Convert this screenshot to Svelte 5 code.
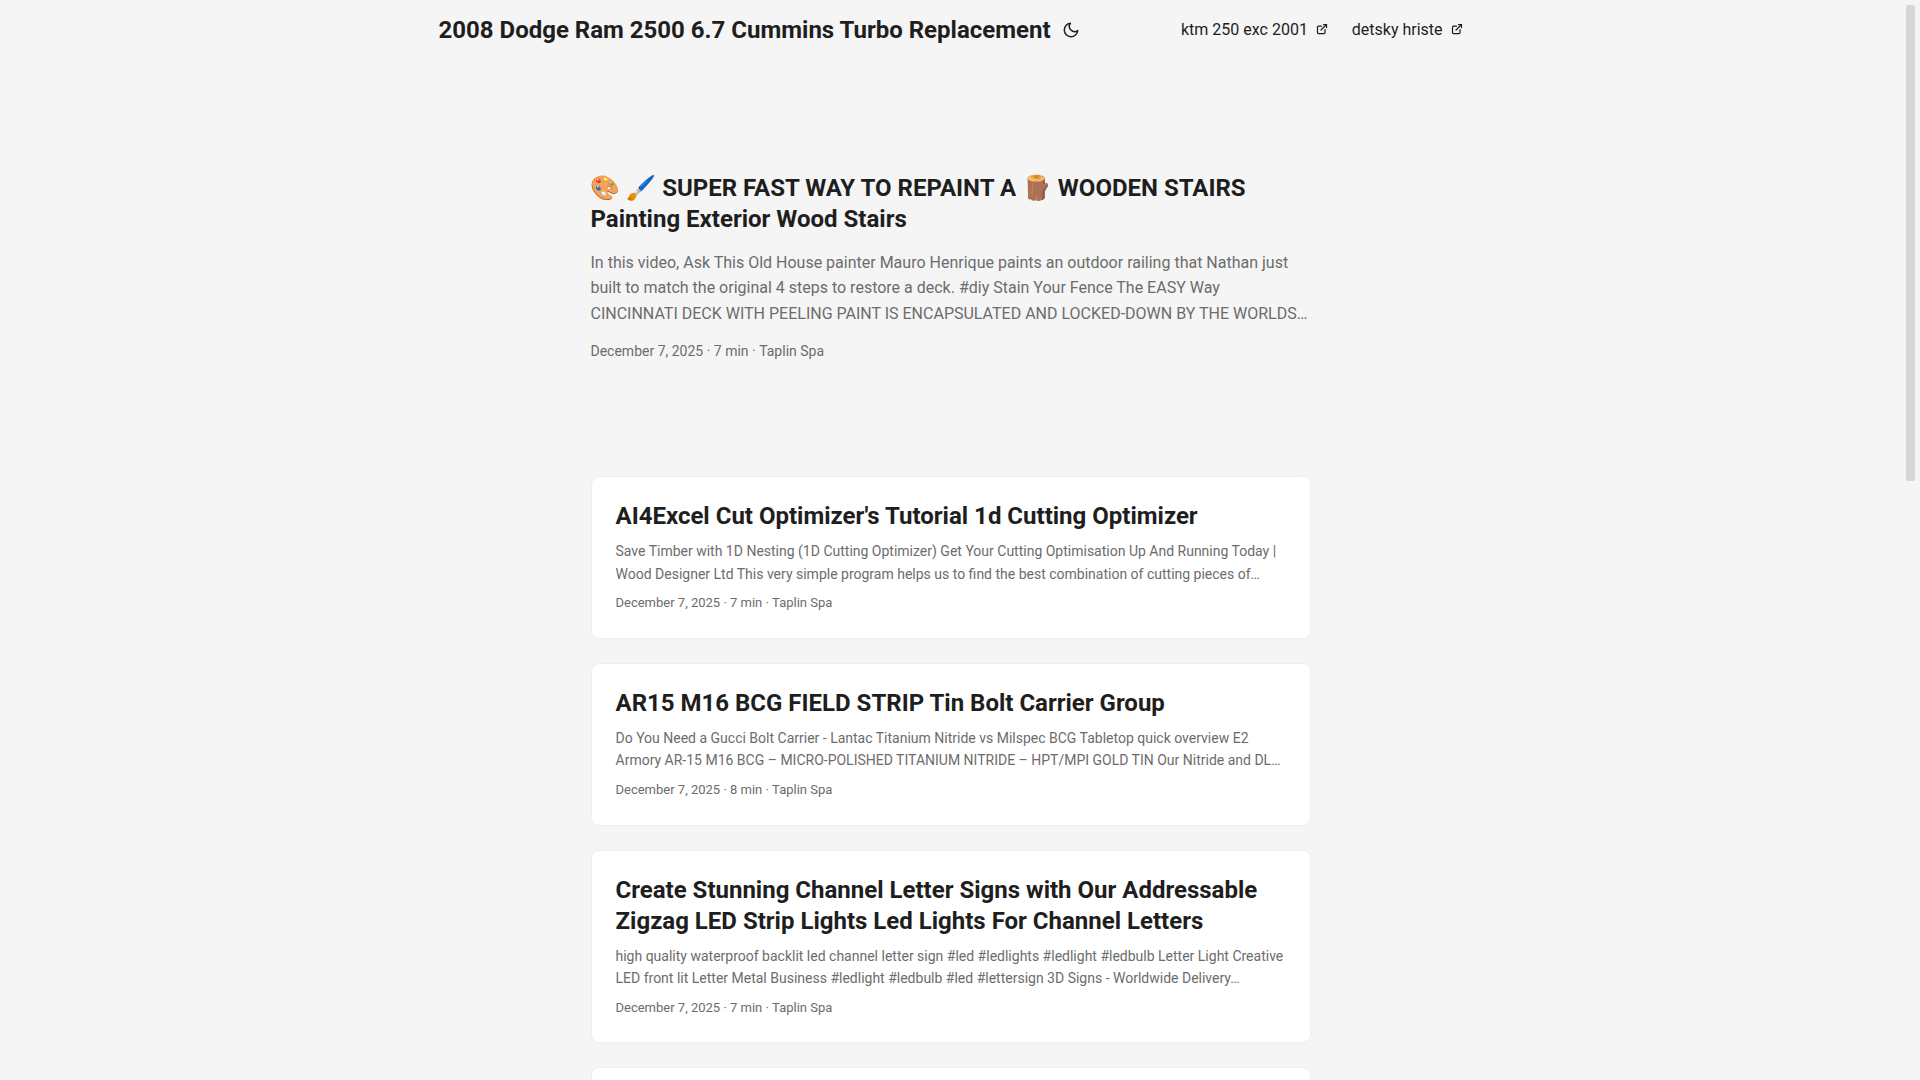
<script>
  const links = [
    { label: 'ktm 250 exc 2001', href: '#ktm' },
    { label: 'detsky hriste', href: '#detsky' }
  ];
  const posts = [
    {
      title: "AI4Excel Cut Optimizer's Tutorial 1d Cutting Optimizer",
      text: 'Save Timber with 1D Nesting (1D Cutting Optimizer) Get Your Cutting Optimisation Up And Running Today | Wood Designer Ltd This very simple program helps us to find the best combination of cutting pieces of…',
      time: '7 min'
    },
    {
      title: 'AR15 M16 BCG FIELD STRIP Tin Bolt Carrier Group',
      text: 'Do You Need a Gucci Bolt Carrier - Lantac Titanium Nitride vs Milspec BCG Tabletop quick overview E2 Armory AR-15 M16 BCG – MICRO-POLISHED TITANIUM NITRIDE – HPT/MPI GOLD TIN Our Nitride and DL…',
      time: '8 min'
    },
    {
      title: 'Create Stunning Channel Letter Signs with Our Addressable Zigzag LED Strip Lights Led Lights For Channel Letters',
      text: 'high quality waterproof backlit led channel letter sign #led #ledlights #ledlight #ledbulb Letter Light Creative LED front lit Letter Metal Business #ledlight #ledbulb #led #lettersign 3D Signs - Worldwide Delivery…',
      time: '7 min'
    }
  ];
</script>

<div class="page">
  <header>
    <nav>
      <div class="logo">
        <a href="#home">2008 Dodge Ram 2500 6.7 Cummins Turbo Replacement</a>
        <button aria-label="Toggle theme">
          <svg width="18" height="18" viewBox="0 0 24 24" fill="none" stroke="currentColor" stroke-width="2" stroke-linecap="round" stroke-linejoin="round">
            <path d="M21 12.79A9 9 0 1 1 11.21 3 7 7 0 0 0 21 12.79z" />
          </svg>
        </button>
      </div>
      <ul>
        {#each links as link}
          <li>
            <a href={link.href}>
              <span>{link.label}</span>&nbsp;
              <svg fill="none" shape-rendering="geometricPrecision" stroke="currentColor" stroke-linecap="round" stroke-linejoin="round" stroke-width="2.5" viewBox="0 0 24 24" height="12" width="12">
                <path d="M18 13v6a2 2 0 01-2 2H5a2 2 0 01-2-2V8a2 2 0 012-2h6" />
                <path d="M15 3h6v6" />
                <path d="M10 14L21 3" />
              </svg>
            </a>
          </li>
        {/each}
      </ul>
    </nav>
  </header>

  <main>
    <article class="first">
      <h2>🎨 🖌️ SUPER FAST WAY TO REPAINT A 🪵 WOODEN STAIRS Painting Exterior Wood Stairs</h2>
      <p>In this video, Ask This Old House painter Mauro Henrique paints an outdoor railing that Nathan just built to match the original 4 steps to restore a deck. #diy Stain Your Fence The EASY Way CINCINNATI DECK WITH PEELING PAINT IS ENCAPSULATED AND LOCKED-DOWN BY THE WORLDS…</p>
      <footer>December 7, 2025&nbsp;·&nbsp;7 min&nbsp;·&nbsp;Taplin Spa</footer>
    </article>
    {#each posts as post}
      <article class="card">
        <h2>{post.title}</h2>
        <p>{post.text}</p>
        <footer>December 7, 2025&nbsp;·&nbsp;{post.time}&nbsp;·&nbsp;Taplin Spa</footer>
      </article>
    {/each}
    <article class="card"></article>
  </main>
  <div class="scrollbar"></div>
</div>

<style>
  :global(body) {
    background: #f5f5f5;
    overflow: hidden;
  }
  * {
    box-sizing: border-box;
    margin: 0;
    padding: 0;
  }
  .page {
    height: 100vh;
    overflow: hidden;
    padding-right: 19px;
    color: #1e1e1e;
    font-family: Roboto, 'Noto Color Emoji', sans-serif;
    font-size: 16px;
    line-height: 1.6;
  }
  a {
    color: inherit;
    text-decoration: none;
  }
  nav {
    display: flex;
    justify-content: space-between;
    max-width: 1072px;
    margin: 0 auto;
    line-height: 60px;
  }
  .logo {
    display: flex;
    margin: 0 24px;
    font-size: 24px;
    font-weight: 700;
  }
  button {
    display: flex;
    align-items: center;
    margin: 0 3px;
    padding: 0 8px;
    border: 0;
    background: none;
    color: inherit;
  }
  ul {
    display: flex;
    gap: 24px;
    margin: 0 24px;
    list-style: none;
    white-space: nowrap;
  }
  main {
    max-width: 768px;
    margin: 0 auto;
    padding: 24px;
  }
  .first {
    display: flex;
    flex-direction: column;
    justify-content: center;
    min-height: 320px;
    margin: 24px 0 48px;
  }
  h2 {
    font-size: 24px;
    line-height: 1.3;
  }
  p {
    margin: 8px 0;
    color: #6c6c6c;
    font-size: 14px;
  }
  .first p {
    margin: 14px 0;
    font-size: 16px;
  }
  footer {
    color: #6c6c6c;
    font-size: 13px;
  }
  .first footer {
    font-size: 14px;
  }
  .card {
    margin-bottom: 24px;
    padding: 24px;
    border: 1px solid #eee;
    border-radius: 8px;
    background: #fff;
  }
  .scrollbar {
    position: fixed;
    top: 5px;
    right: 5px;
    width: 9px;
    height: 476px;
    border-radius: 2px;
    background: #d6d6d6;
  }
</style>
